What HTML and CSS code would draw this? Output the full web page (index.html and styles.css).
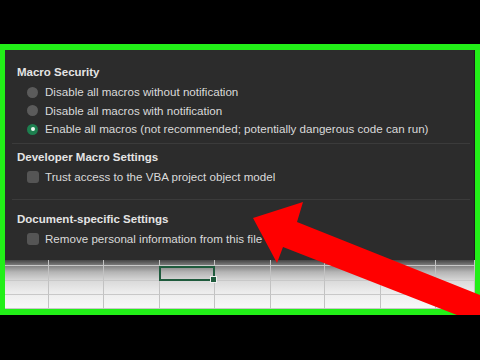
FILE: index.html
```html
<!DOCTYPE html>
<html>
<head>
<meta charset="utf-8">
<link rel="stylesheet" href="styles.css">
</head>
<body>
<div class="bar top"></div>
<div class="frame">
  <div class="dialog">
    <div class="section s1">
      <div class="head">Macro Security</div>
      <div class="item"><span class="radio"></span>Disable all macros without notification</div>
      <div class="item"><span class="radio"></span>Disable all macros with notification</div>
      <div class="item"><span class="radio on"></span>Enable all macros (not recommended; potentially dangerous code can run)</div>
    </div>
    <div class="section s2">
      <div class="head">Developer Macro Settings</div>
      <div class="item"><span class="check"></span>Trust access to the VBA project object model</div>
    </div>
    <div class="section s3">
      <div class="head">Document-specific Settings</div>
      <div class="item"><span class="check"></span>Remove personal information from this file</div>
    </div>
  </div>
  <div class="sheet">
    <div></div><div></div><div></div><div></div><div></div><div></div><div></div><div></div><div></div>
    <div></div><div></div><div></div><div class="sel"></div><div></div><div></div><div></div><div></div><div></div>
    <div></div><div></div><div></div><div></div><div></div><div></div><div></div><div></div><div></div>
    <div></div><div></div><div></div><div></div><div></div><div></div><div></div><div></div><div></div>
  </div>
  <svg class="arrow" width="480" height="271" viewBox="0 0 480 271">
    <polygon points="253,174 303,158 297,178 600,299 600,327 283,203 277,219" fill="#ff0000"/>
  </svg>
</div>
<div class="bar bottom"></div>
</body>
</html>
```
FILE: styles.css
```css
html, body {
  margin: 0;
  padding: 0;
  background: #000;
  width: 480px;
  height: 360px;
  overflow: hidden;
  font-family: "Liberation Sans", Arial, sans-serif;
}
.bar.top { height: 44px; }
.bar.bottom { height: 45px; }
.frame {
  position: relative;
  height: 271px;
  box-sizing: border-box;
  padding: 6px 5px;
  background: #22ef18;
  overflow: hidden;
  display: flex;
  flex-direction: column;
}
.dialog {
  height: 212px;
  box-sizing: border-box;
  background: #2c2c2c;
  border-right: 1px solid #1c1c1c;
  padding: 14px 4px 0 7px;
  color: #dedede;
}
.section {
  padding-left: 5px;
  border-bottom: 1px solid #3b3b3b;
}
.section.s1 { padding-bottom: 4px; }
.section.s2 { padding-top: 5px; padding-bottom: 13px; }
.section.s3 { padding-top: 11px; border-bottom: none; }
.head {
  font-weight: bold;
  font-size: 11.5px;
  line-height: 16px;
  color: #e4e4e4;
  margin-bottom: 3px;
}
.item {
  display: flex;
  align-items: center;
  font-size: 11.6px;
  line-height: 18.5px;
  padding-left: 10px;
  white-space: nowrap;
  color: #dadada;
}
.radio {
  width: 11px;
  height: 11px;
  border-radius: 50%;
  background: #5b5b5b;
  margin-right: 7px;
  flex: none;
  display: flex;
  align-items: center;
  justify-content: center;
}
.radio.on { background: #1d7f4f; }
.radio.on::after {
  content: "";
  width: 4px;
  height: 4px;
  border-radius: 50%;
  background: #eef8f2;
}
.check {
  width: 12px;
  height: 12px;
  border-radius: 3px;
  background: #555;
  margin-right: 6px;
  flex: none;
}
.sheet {
  flex: 1;
  display: grid;
  grid-template-columns: 44px 55px 56px 55px 56px 54px 56px 55px 1fr;
  grid-template-rows: 6px 15px 14px 14px;
  background: linear-gradient(#444 0px, #7a7a7a 5px, #b4b4b4 12px, #dadada 21px, #ececec 32px, #f7f7f7 47px);
}
.sheet > div {
  box-sizing: border-box;
  border-right: 1px solid #c2c2c2;
  border-bottom: 1px solid #c8c8c8;
}
.sheet > div.sel {
  position: relative;
  border: 2px solid #1f5b3d;
  margin-left: -1px;
}
.sheet > div.sel::after {
  content: "";
  position: absolute;
  right: -4px;
  bottom: -4px;
  width: 5px;
  height: 5px;
  background: #1f5b3d;
  border: 1px solid #f0f0f0;
}
.arrow {
  position: absolute;
  left: 0;
  top: 0;
}
```
